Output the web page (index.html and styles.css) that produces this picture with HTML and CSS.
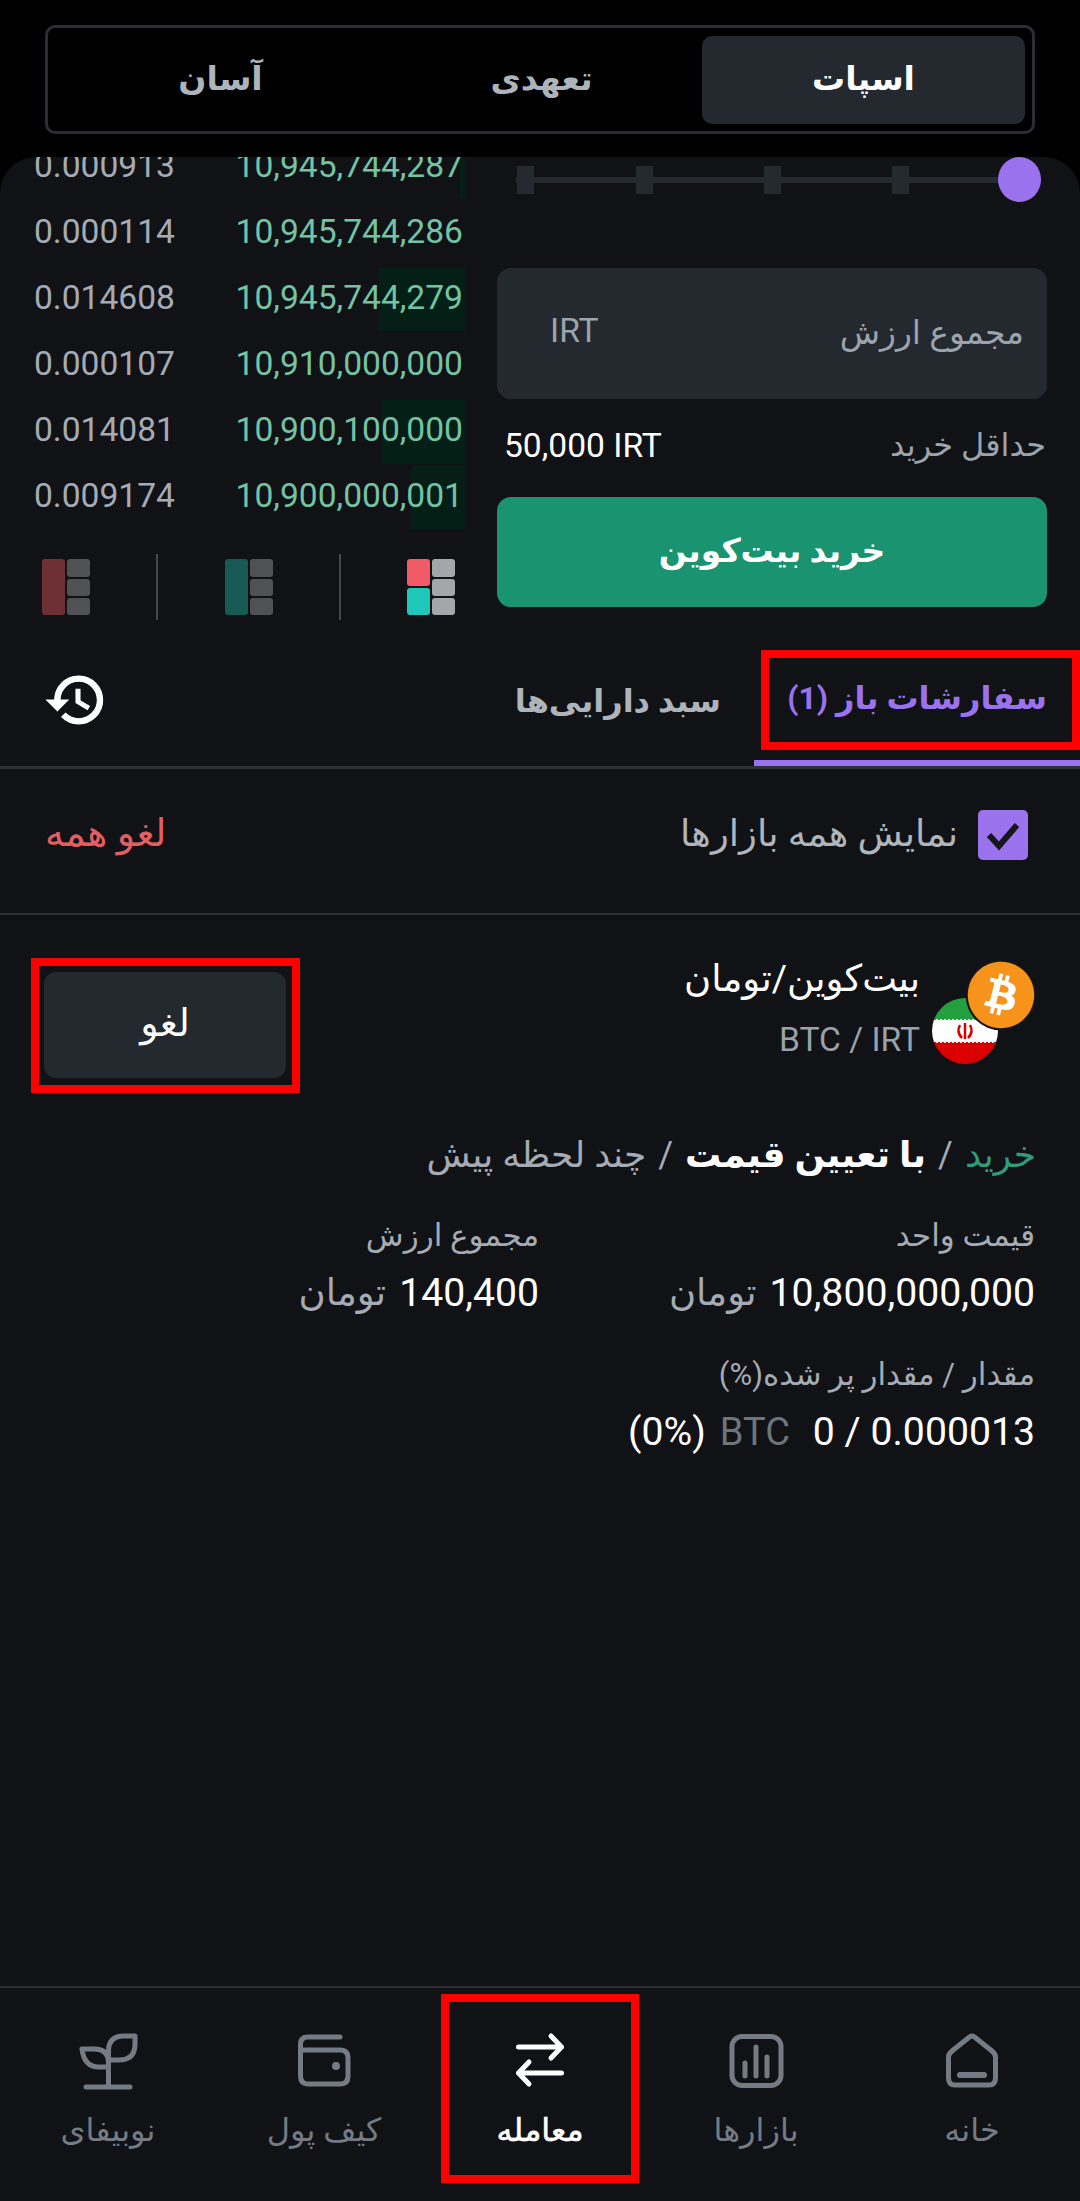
FILE: index.html
```html
<!DOCTYPE html>
<html lang="fa" dir="rtl">
<head>
    <meta charset="UTF-8">
    <meta name="viewport" content="width=device-width, initial-scale=1.0">
    <title>معامله</title>
    <link rel="stylesheet" href="styles.css">
</head>
<body>
    <div class="page">
        <div class="top-bar">
            <div class="segment">
                <div class="segment-item active">اسپات</div>
                <div class="segment-item">تعهدی</div>
                <div class="segment-item">آسان</div>
            </div>
        </div>

        <div class="panel">
            <div class="trade">
                <div class="order-form">
                    <div class="slider">
                        <span class="slider-thumb"></span>
                        <span class="slider-tick"></span>
                        <span class="slider-tick"></span>
                        <span class="slider-tick"></span>
                        <span class="slider-tick last"></span>
                    </div>
                    <div class="amount-input">
                        <span class="amount-label">مجموع ارزش</span>
                        <span class="amount-unit">IRT</span>
                    </div>
                    <div class="min-row">
                        <span class="min-label">حداقل خرید</span>
                        <span class="min-value" dir="ltr">50,000 IRT</span>
                    </div>
                    <button class="buy-btn">خرید بیت‌کوین</button>
                </div>

                <div class="order-book">
                    <div class="book-row"><span class="depth" style="width: 5px"></span><span class="price">10,945,744,287</span><span class="qty">0.000913</span></div>
                    <div class="book-row"><span class="price">10,945,744,286</span><span class="qty">0.000114</span></div>
                    <div class="book-row"><span class="depth" style="width: 86px"></span><span class="price">10,945,744,279</span><span class="qty">0.014608</span></div>
                    <div class="book-row"><span class="price">10,910,000,000</span><span class="qty">0.000107</span></div>
                    <div class="book-row"><span class="depth" style="width: 84px"></span><span class="price">10,900,100,000</span><span class="qty">0.014081</span></div>
                    <div class="book-row"><span class="depth" style="width: 54px"></span><span class="price">10,900,000,001</span><span class="qty">0.009174</span></div>

                    <div class="book-views">
                        <svg width="48" height="56" viewBox="0 0 48 56">
                            <rect x="0" y="0" width="23" height="27" rx="3" fill="#f15b67"/>
                            <rect x="0" y="29" width="23" height="27" rx="3" fill="#1fc7bb"/>
                            <rect x="25" y="0" width="23" height="18" rx="3" fill="#a5a6a9"/>
                            <rect x="25" y="20" width="23" height="17" rx="3" fill="#a5a6a9"/>
                            <rect x="25" y="39" width="23" height="17" rx="3" fill="#a5a6a9"/>
                        </svg>
                        <span class="view-sep"></span>
                        <svg width="48" height="56" viewBox="0 0 48 56">
                            <rect x="0" y="0" width="23" height="56" rx="3" fill="#175a54"/>
                            <rect x="25" y="0" width="23" height="18" rx="3" fill="#505154"/>
                            <rect x="25" y="20" width="23" height="17" rx="3" fill="#505154"/>
                            <rect x="25" y="39" width="23" height="17" rx="3" fill="#505154"/>
                        </svg>
                        <span class="view-sep"></span>
                        <svg width="48" height="56" viewBox="0 0 48 56">
                            <rect x="0" y="0" width="23" height="56" rx="3" fill="#6e2f35"/>
                            <rect x="25" y="0" width="23" height="18" rx="3" fill="#505154"/>
                            <rect x="25" y="20" width="23" height="17" rx="3" fill="#505154"/>
                            <rect x="25" y="39" width="23" height="17" rx="3" fill="#505154"/>
                        </svg>
                    </div>
                </div>
            </div>

            <div class="tabs">
                <div class="tab active">سفارشات باز (1)<span class="mark mark-tab"></span></div>
                <div class="tab">سبد دارایی‌ها</div>
                <svg class="history-icon" width="64" height="64" viewBox="0 0 24 24">
                    <path fill="#fff" stroke="#fff" stroke-width=".4" d="M13 3c-4.970 0-9 4.030-9 9H1l3.890 3.890.07.14L9 12H6c0-3.870 3.130-7 7-7s7 3.130 7 7-3.130 7-7 7c-1.930 0-3.680-.79-4.940-2.060l-1.420 1.420C8.270 19.990 10.510 21 13 21c4.970 0 9-4.030 9-9s-4.030-9-9-9zm-1 5v5l4.280 2.540.72-1.210-3.500-2.080V8H12z"/>
                </svg>
            </div>

            <div class="filter-row">
                <div class="check-wrap">
                    <span class="check-box">
                        <svg width="50" height="50" viewBox="0 0 50 50"><path d="M11 25 21 36 39 15" fill="none" stroke="#15171b" stroke-width="6"/></svg>
                    </span>
                    <span class="check-label">نمایش همه بازارها</span>
                </div>
                <span class="cancel-all">لغو همه</span>
            </div>

            <div class="order-card">
                <div class="order-head">
                    <div class="pair-icons">
                        <svg class="flag-icon" width="66" height="66" viewBox="0 0 66 66">
                            <clipPath id="flagClip"><circle cx="33" cy="33" r="33"/></clipPath>
                            <g clip-path="url(#flagClip)">
                                <rect width="66" height="22" fill="#239f40"/>
                                <rect y="22" width="66" height="22" fill="#fff"/>
                                <rect y="44" width="66" height="22" fill="#da0000"/>
                                <path d="M0 22H66M0 44H66" stroke="#e8e8e8" stroke-width="2" stroke-dasharray="2 2"/>
                                <path d="M33 25V41M28 27Q24 34 30 40M38 27Q42 34 36 40" fill="none" stroke="#da0000" stroke-width="2.500"/>
                            </g>
                        </svg>
                        <svg class="btc-icon" width="72" height="72" viewBox="-1 -1 26 26">
                            <circle cx="12" cy="12" r="12.800" fill="#15171a"/>
                            <circle cx="12" cy="12" r="10" fill="#fff"/>
                            <path fill="#f7931a" d="M23.638 14.904c-1.602 6.43-8.113 10.34-14.542 8.736C2.67 22.05-1.244 15.525.362 9.105 1.962 2.67 8.475-1.243 14.9.358c6.43 1.605 10.342 8.115 8.738 14.548v-.002zm-6.35-4.613c.24-1.59-.974-2.45-2.64-3.03l.54-2.153-1.315-.33-.525 2.107c-.345-.087-.705-.167-1.064-.25l.526-2.127-1.32-.33-.54 2.165c-.285-.067-.565-.132-.84-.2l-1.815-.45-.35 1.407s.975.225.955.236c.535.136.63.486.615.766l-1.477 5.92c-.075.166-.24.406-.614.314.015.02-.96-.24-.96-.24l-.66 1.51 1.71.426.93.242-.54 2.19 1.32.327.54-2.17c.36.1.705.19 1.05.273l-.51 2.154 1.32.33.545-2.19c2.24.427 3.93.257 4.64-1.774.57-1.637-.03-2.58-1.217-3.196.854-.193 1.5-.76 1.68-1.93h.01zm-3.01 4.22c-.404 1.64-3.157.75-4.05.53l.72-2.9c.896.23 3.757.67 3.33 2.37zm.41-4.24c-.37 1.49-2.662.735-3.405.55l.654-2.64c.744.18 3.137.524 2.75 2.084v.006z"/>
                        </svg>
                    </div>
                    <div class="pair-names">
                        <div class="pair-title">بیت‌کوین/تومان</div>
                        <div class="pair-sub">BTC / IRT</div>
                    </div>
                    <button class="cancel-btn">لغو<span class="mark mark-cancel"></span></button>
                </div>

                <div class="order-status">
                    <span class="status-buy">خرید</span>
                    <span class="status-sep">/</span>
                    <span class="status-type">با تعیین قیمت</span>
                    <span class="status-sep">/</span>
                    <span class="status-time">چند لحظه پیش</span>
                </div>

                <div class="details">
                    <div class="detail">
                        <div class="detail-label">قیمت واحد</div>
                        <div class="detail-value"><span>10,800,000,000</span><span class="unit">تومان</span></div>
                    </div>
                    <div class="detail">
                        <div class="detail-label">مجموع ارزش</div>
                        <div class="detail-value"><span>140,400</span><span class="unit">تومان</span></div>
                    </div>
                    <div class="detail wide">
                        <div class="detail-label">مقدار / مقدار پر شده(%)</div>
                        <div class="detail-value amount">
                            <span>0.000013 / 0</span>
                            <span class="coin">BTC</span>
                            <bdi>(0%)</bdi>
                        </div>
                    </div>
                </div>
            </div>

            <div class="bottom-nav">
                <div class="nav-item">
                    <svg width="60" height="60" viewBox="-2 -2 60 60" class="nav-icon">
                        <path d="M8 19 25.500 5Q28 3.200 30.500 5L48 19Q51.500 22 51.500 25V46Q51.500 53 45 53H11Q4.500 53 4.500 46V25Q4.500 22 8 19Z"/>
                        <path d="M16 43H40" stroke-width="6"/>
                    </svg>
                    <span>خانه</span>
                </div>
                <div class="nav-item">
                    <svg width="60" height="60" viewBox="-2 -2 60 60" class="nav-icon">
                        <rect x="4" y="4.500" width="49" height="49" rx="10"/>
                        <path d="M17 31V44M28 15V44M39 25V44"/>
                    </svg>
                    <span>بازارها</span>
                </div>
                <div class="nav-item active">
                    <svg width="60" height="60" viewBox="-2 -2 60 60" class="nav-icon">
                        <path d="M6.500 15H49.500M39 4 49.500 15 39 26M49.500 41H6.500M17 30 6.500 41 17 52"/>
                    </svg>
                    <span>معامله</span>
                    <span class="mark mark-nav"></span>
                </div>
                <div class="nav-item">
                    <svg width="60" height="60" viewBox="-2 -2 60 60" class="nav-icon">
                        <path d="M44 5H12Q4.500 5 4.500 12V44Q4.500 52 12 52H44Q52 52 52 44V26Q52 18 44 18H4.500"/>
                        <circle cx="40" cy="34" r="4" fill="#747b85" stroke="none"/>
                    </svg>
                    <span>کیف پول</span>
                </div>
                <div class="nav-item">
                    <svg width="60" height="60" viewBox="0 0 60 60" class="nav-icon">
                        <path d="M8 57H52M30.500 57V30"/>
                        <path d="M30.500 30V21Q30.500 6 46 6H57V14Q57 30 41 30H30.500Z"/>
                        <path d="M30.500 37H21Q6 37 4 19H16Q30.500 19 30.500 33"/>
                    </svg>
                    <span>نوبیفای</span>
                </div>
            </div>
        </div>
    </div>
</body>
</html>
```

FILE: styles.css
```css
* {
    margin: 0;
    padding: 0;
    box-sizing: border-box;
}

body {
    font-family: Roboto, "DejaVu Sans", sans-serif;
    background: #000;
    color: #fff;
    overflow: hidden;
}

button {
    font-family: inherit;
    border: none;
    color: #fff;
}

.page {
    width: 1080px;
    height: 2201px;
    display: flex;
    flex-direction: column;
    overflow: hidden;
}

.top-bar {
    height: 157px;
    padding: 25px 45px 0 45px;
}

.segment {
    height: 109px;
    border: 3px solid #2b2f35;
    border-radius: 10px;
    padding: 8px 7px 7px 12px;
    display: grid;
    grid-template-columns: 323px 1fr 1fr;
}

.segment-item {
    display: flex;
    align-items: center;
    justify-content: center;
    padding-bottom: 4px;
    font-size: 33px;
    font-weight: bold;
    color: #aeb4bb;
    border-radius: 10px;
}

.segment-item.active {
    background: #23292f;
    color: #fff;
}

.panel {
    flex: 1;
    display: flex;
    flex-direction: column;
    background: #101215;
    border-radius: 36px 36px 0 0;
    overflow: hidden;
}

/* order form + book */
.trade {
    height: 489px;
    padding: 0 33px 0 34px;
    display: flex;
    gap: 32px;
}

.order-form {
    width: 550px;
}

.slider {
    height: 45px;
    margin: 0 6px 0 19px;
    display: flex;
    align-items: center;
    background: linear-gradient(#252a30, #252a30) center / 100% 6px no-repeat;
}

.slider-thumb {
    width: 43px;
    height: 45px;
    border-radius: 50%;
    background: #9b72ee;
    margin-left: 89px;
}

.slider-tick {
    width: 17px;
    height: 28px;
    background: #252a30;
    margin-left: 111px;
}

.slider-tick.last {
    margin-left: 0;
    margin-right: -9px;
}

.amount-input {
    height: 131px;
    margin-top: 66px;
    padding: 0 23px 0 53px;
    background: #23292f;
    border-radius: 14px;
    display: flex;
    align-items: center;
    justify-content: space-between;
}

.amount-label {
    font-size: 33px;
    color: #9ba3ad;
    margin-bottom: 3px;
}

.amount-unit {
    font-size: 33.6px;
    color: #9ba3ad;
    margin-bottom: 7px;
}

.min-row {
    height: 40px;
    margin-top: 26px;
    padding: 0 1px 0 7px;
    display: flex;
    align-items: center;
    justify-content: space-between;
}

.min-label {
    font-size: 32px;
    color: #9ba3ad;
}

.min-value {
    font-size: 33.6px;
}

.buy-btn {
    width: 100%;
    height: 110px;
    margin-top: 32px;
    padding-bottom: 4px;
    background: #1a9370;
    border-radius: 14px;
    font-size: 33px;
    font-weight: bold;
}

.order-book {
    flex: 1;
    margin-top: -25px;
}

.book-row {
    position: relative;
    height: 63px;
    margin-bottom: 3px;
    padding: 0 2px 5px 0;
    display: flex;
    align-items: center;
    justify-content: space-between;
    font-size: 33.6px;
}

.book-row:first-child {
    margin-top: 4px;
    margin-bottom: 3px;
}

.depth {
    position: absolute;
    top: 0;
    bottom: 0;
    right: 0;
    background: #042016;
}

.price {
    position: relative;
    color: #74c3a4;
}

.qty {
    color: #a5abb4;
}

.book-views {
    margin-top: 25px;
    padding: 0 10px 0 8px;
    display: flex;
    align-items: center;
    justify-content: space-between;
}

.view-sep {
    width: 2px;
    height: 66px;
    background: #45484c;
}

/* tabs */
.tabs {
    height: 123px;
    border-bottom: 3px solid #2d3136;
    display: flex;
}

.tab {
    position: relative;
    padding: 0 33px 10px 33px;
    display: flex;
    align-items: center;
    font-size: 32px;
    font-weight: bold;
    color: #aeb4bb;
}

.tab.active {
    width: 326px;
    color: #9b72ee;
    border-bottom: 6px solid #9b72ee;
}

.history-icon {
    margin: 22px auto 0 44px;
}

/* red marks drawn over the shot */
.mark {
    position: absolute;
    border: 8px solid #f00;
    pointer-events: none;
}

.mark-tab {
    top: 4px;
    left: 7px;
    right: 0;
    height: 100px;
}

.mark-cancel {
    top: -14px;
    bottom: -15px;
    left: -13px;
    right: -14px;
}

.mark-nav {
    top: 6px;
    bottom: 18px;
    left: 9px;
    right: 9px;
}

/* filter row */
.filter-row {
    height: 146px;
    padding: 0 52px 12px 45px;
    border-bottom: 2px solid #2d3136;
    display: flex;
    align-items: center;
    justify-content: space-between;
}

.check-wrap {
    display: flex;
    align-items: center;
    gap: 20px;
}

.check-box {
    width: 50px;
    height: 50px;
    border-radius: 5px;
    background: #9b72ee;
}

.check-label {
    font-size: 37px;
    color: #b0b5bb;
    margin-bottom: 4px;
}

.cancel-all {
    font-size: 38px;
    color: #e35f62;
    margin-bottom: 4px;
}

/* order */
.order-card {
    padding: 47px 45px 0 44px;
}

.order-head {
    display: flex;
    height: 116px;
}

.pair-icons {
    position: relative;
    width: 103px;
    height: 102px;
}

.btc-icon {
    position: absolute;
    top: -3px;
    right: -2px;
}

.flag-icon {
    position: absolute;
    bottom: 0;
    left: 0;
}

.pair-names {
    margin-top: -4px;
    margin-right: 12px;
}

.pair-title {
    font-size: 37px;
    line-height: 42px;
}

.pair-sub {
    margin-top: 20px;
    font-size: 33.6px;
    line-height: 40px;
    color: #9aa1a9;
    direction: ltr;
    text-align: right;
}

.cancel-btn {
    position: relative;
    width: 242px;
    height: 106px;
    margin: 10px auto 0 0;
    padding-bottom: 4px;
    background: #23292f;
    border-radius: 12px;
    font-size: 38px;
}

.order-status {
    margin-top: 55px;
    margin-right: -1px;
    display: flex;
    align-items: center;
    gap: 12px;
    height: 44px;
    font-size: 36px;
}

.status-buy {
    color: #2f9d7b;
}

.status-sep,
.status-time {
    color: #a5abb4;
}

.status-type {
    font-weight: bold;
}

.details {
    margin-top: 41px;
    display: grid;
    grid-template-columns: 496px 1fr;
    row-gap: 40px;
}

.detail.wide {
    grid-column: 1 / 3;
}

.detail-label {
    height: 40px;
    font-size: 31px;
    line-height: 36px;
    color: #a5abb4;
}

.detail-value {
    margin-top: 11px;
    display: flex;
    align-items: center;
    gap: 13px;
    font-size: 39.2px;
    line-height: 48px;
}

.detail-value .unit {
    font-size: 37px;
    color: #a5abb4;
}

.detail-value.amount {
    gap: 14px;
}

.detail-value .coin {
    margin-right: 9px;
    font-size: 38px;
    color: #6d747c;
}

/* bottom nav */
.bottom-nav {
    margin-top: auto;
    height: 215px;
    border-top: 2px solid #2b2e34;
    display: grid;
    grid-template-columns: repeat(5, 1fr);
}

.nav-item {
    position: relative;
    padding-top: 42px;
    display: flex;
    flex-direction: column;
    align-items: center;
    gap: 20px;
    font-size: 32px;
    line-height: 40px;
    color: #747b85;
}

.nav-item.active {
    color: #fff;
    -webkit-text-stroke: 0.6px #fff;
}

.nav-icon {
    fill: none;
    stroke: #747b85;
    stroke-width: 5;
    stroke-linecap: round;
    stroke-linejoin: round;
}

.nav-item.active .nav-icon {
    stroke: #fff;
}
```
